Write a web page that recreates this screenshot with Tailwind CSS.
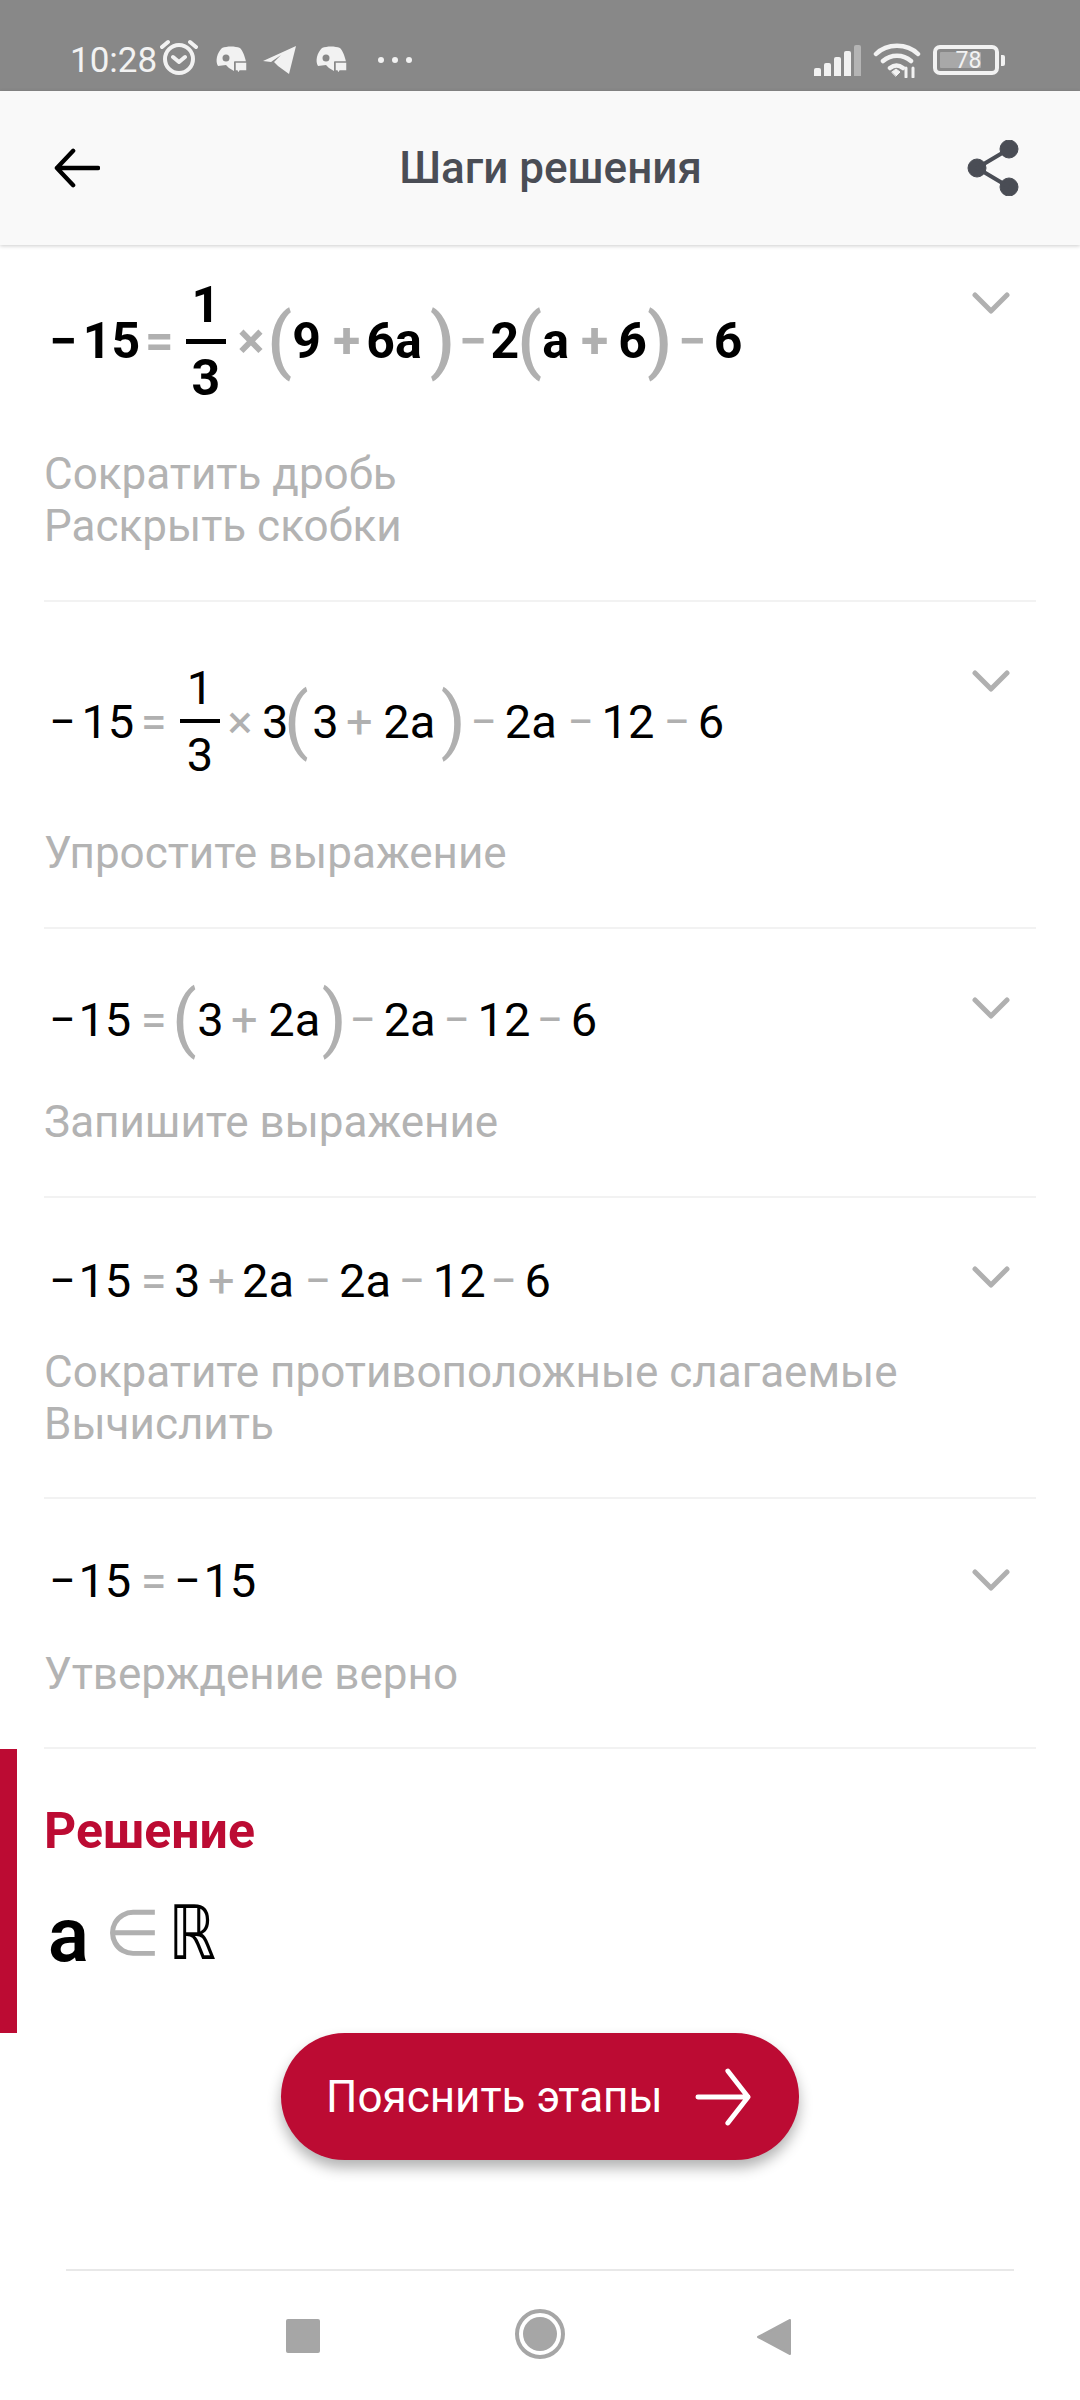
<!DOCTYPE html>
<html lang="ru">
<head>
  <meta charset="UTF-8" />
  <meta name="viewport" content="width=device-width, initial-scale=1.0"/>
  <script src="https://cdn.jsdelivr.net/npm/@tailwindcss/browser@4"></script>
  <title>Шаги решения</title>
</head>
<body class="bg-white font-['Roboto',sans-serif]">
<div class="w-[1080px] h-[2400px] flex flex-col overflow-hidden relative">

  <!-- status bar -->
  <div class="h-[91px] bg-[#888888] flex items-end justify-between pb-[11px] pl-[70px] pr-[75px] text-[#f2f2f2] shrink-0">
    <div class="flex items-center h-[40px]">
      <span class="text-[35px] leading-none w-[90px]">10:28</span>
      <svg class="w-[38px] h-[38px] mt-[-6px]" viewBox="0 0 38 38" fill="none" stroke="#f2f2f2" stroke-width="4" stroke-linecap="round" stroke-linejoin="round"><circle cx="19" cy="21" r="14"/><path d="M13 19l6 5 6-5M2 9l6-5M36 9l-6-5"/></svg>
      <svg class="w-[34px] h-[30px] ml-[16px]" viewBox="0 0 32 30" fill="#f2f2f2"><path d="M7 3c5-2 13-2 18 0 3 3 5 9 6 14H19v9l-5-3-3-3-8 1c-3-5-1-13 4-18z"/><circle cx="11" cy="13" r="3.5" fill="#888888"/><path d="M20 17h12v9h-7l-2 3-1-3h-2z" stroke="#888888" stroke-width="1.5"/></svg>
      <svg class="w-[34px] h-[30px] ml-[15px]" viewBox="0 0 34 30" fill="#f2f2f2"><path d="M0 16 33 1 26 29 15 21 11 17 18 10 8 17z"/></svg>
      <svg class="w-[34px] h-[30px] ml-[17px]" viewBox="0 0 32 30" fill="#f2f2f2"><path d="M7 3c5-2 13-2 18 0 3 3 5 9 6 14H19v9l-5-3-3-3-8 1c-3-5-1-13 4-18z"/><circle cx="11" cy="13" r="3.5" fill="#888888"/><path d="M20 17h12v9h-7l-2 3-1-3h-2z" stroke="#888888" stroke-width="1.5"/></svg>
      <div class="flex gap-[8px] ml-[30px]"><i class="w-[6px] h-[6px] rounded-full bg-[#f2f2f2]"></i><i class="w-[6px] h-[6px] rounded-full bg-[#f2f2f2]"></i><i class="w-[6px] h-[6px] rounded-full bg-[#f2f2f2]"></i></div>
    </div>
    <div class="flex items-center h-[40px]">
      <div class="flex items-end gap-[3px] h-[32px]">
        <i class="w-[7px] h-[8px] rounded-t-[2px] bg-[#f2f2f2]"></i>
        <i class="w-[7px] h-[13px] rounded-t-[2px] bg-[#f2f2f2]"></i>
        <i class="w-[7px] h-[19px] rounded-t-[2px] bg-[#f2f2f2]"></i>
        <i class="w-[7px] h-[25px] rounded-t-[2px] bg-[#f2f2f2]"></i>
        <i class="w-[7px] h-[31px] rounded-t-[2px] bg-[#b4b4b4]"></i>
      </div>
      <svg class="w-[48px] h-[36px] ml-[12px]" viewBox="0 0 48 36" fill="none" stroke="#f2f2f2" stroke-width="4.5" stroke-linecap="round"><path d="M3 12C14 1 34 1 45 12M10 19c8-7 20-7 28 0M17 26c4-3 9-3 13 0"/><path d="M19 30l4-3 4 3-4 4z" fill="#f2f2f2" stroke-width="1"/><path d="M33 35v-9M40 35v-9" stroke-width="3"/></svg>
      <div class="ml-[12px] w-[66px] h-[30px] border-[4px] border-[#f2f2f2] rounded-[7px] relative flex items-center">
        <div class="absolute left-[3px] top-[3px] bottom-[3px] w-[41px] bg-[#a8a8a8] rounded-[1px]"></div>
        <span class="relative w-full text-center text-[23px] leading-none pl-[5px]">78</span>
      </div>
      <i class="ml-[2px] w-[4px] h-[11px] rounded-r-[2px] bg-[#f2f2f2]"></i>
    </div>
  </div>

  <!-- top bar -->
  <div class="h-[154px] bg-[#f9f9f9] shadow-[0_1px_4px_rgba(0,0,0,0.2)] shrink-0 relative z-10 flex items-center justify-between pl-[54px] pr-[61px]">
    <svg class="w-[46px] h-[40px]" viewBox="0 0 48 40" fill="none" stroke="#000" stroke-width="4.5" stroke-linecap="round" stroke-linejoin="round"><path d="M46 20H3M20 2 3 20l17 18"/></svg>
    <span class="ml-[34px] text-[44px] font-medium text-[#4a4d55] leading-none">Шаги решения</span>
    <svg class="w-[52px] h-[56px]" viewBox="0 0 52 56" fill="#4a4d55" stroke="#4a4d55"><circle cx="42" cy="9" r="9"/><circle cx="10" cy="28" r="9"/><circle cx="42" cy="47" r="9"/><path d="M42 9 10 28l32 19" fill="none" stroke-width="4"/></svg>
  </div>

  <!-- steps -->
  <div class="px-[44px] shrink-0">
    <div class="h-[357px] border-b-2 border-[#f2f2f2] relative">
      <svg class="absolute right-[26px] top-[47px] w-[38px] h-[22px]" viewBox="0 0 38 22" fill="none" stroke="#b0b0b0" stroke-width="5" stroke-linecap="round" stroke-linejoin="round"><path d="M3 3l16 16L35 3"/></svg>
      <div class="absolute left-[5px] top-[49px] h-[94px] flex items-center text-[50px] font-bold text-black leading-none gap-[12px]">
        <span>−</span><span class="ml-[-6px]">15</span><span class="text-[#b0b0b0] ml-[-7px]">=</span>
        <span class="flex flex-col items-center w-[40px]"><span>1</span><i class="w-full h-[5px] bg-black my-[9px]"></i><span>3</span></span>
        <span class="text-[#b0b0b0]">×</span><span class="text-[#b0b0b0] text-[72px] font-medium ml-[-9px] mr-[-12px]">(</span>
        <span>9</span><span class="text-[#b0b0b0]">+</span><span class="ml-[-6px]">6a</span>
        <span class="text-[#b0b0b0] text-[72px] font-medium ml-[-4px] mr-[-8px]">)</span><span class="text-[#b0b0b0]">−</span><span class="ml-[-8px]">2</span>
        <span class="text-[#b0b0b0] text-[72px] font-medium ml-[-14px] mr-[-12px]">(</span><span>a</span><span class="text-[#b0b0b0]">+</span><span class="ml-[-2px]">6</span>
        <span class="text-[#b0b0b0] text-[72px] font-medium ml-[-12px] mr-[-6px]">)</span><span class="text-[#b0b0b0]">−</span><span class="ml-[-4px]">6</span>
      </div>
      <div class="absolute left-0 top-[203px] text-[44px] leading-[52px] text-[#b3b3b3]">Сократить дробь<br>Раскрыть скобки</div>
    </div>

    <div class="h-[327px] border-b-2 border-[#f2f2f2] relative">
      <svg class="absolute right-[26px] top-[68px] w-[38px] h-[22px]" viewBox="0 0 38 22" fill="none" stroke="#b0b0b0" stroke-width="5" stroke-linecap="round" stroke-linejoin="round"><path d="M3 3l16 16L35 3"/></svg>
      <div class="absolute left-[5px] top-[72px] h-[94px] flex items-center text-[47px] text-black leading-none gap-[7.5px]">
        <span>−</span><span class="ml-[-2px]">15</span><span class="text-[#b0b0b0] ml-[-1px]">=</span>
        <span class="flex flex-col items-center w-[40px] ml-[6px]"><span>1</span><i class="w-full h-[4px] bg-black my-[8px]"></i><span>3</span></span>
        <span class="text-[#b0b0b0]">×</span><span class="ml-[2px]">3</span><span class="text-[#b0b0b0] text-[72px] ml-[-12px] mr-[-4px]">(</span>
        <span>3</span><span class="text-[#b0b0b0]">+</span><span class="ml-[3px]">2a</span>
        <span class="text-[#b0b0b0] text-[72px] ml-[-2px] mr-[-3px]">)</span><span class="text-[#b0b0b0]">−</span><span>2a</span>
        <span class="text-[#b0b0b0] ml-[3px]">−</span><span>12</span><span class="text-[#b0b0b0] ml-[1.5px]">−</span><span>6</span>
      </div>
      <div class="absolute left-0 top-[225px] text-[44px] leading-[52px] text-[#b3b3b3]">Упростите выражение</div>
    </div>

    <div class="h-[269px] border-b-2 border-[#f2f2f2] relative">
      <svg class="absolute right-[26px] top-[68px] w-[38px] h-[22px]" viewBox="0 0 38 22" fill="none" stroke="#b0b0b0" stroke-width="5" stroke-linecap="round" stroke-linejoin="round"><path d="M3 3l16 16L35 3"/></svg>
      <div class="absolute left-[5px] top-[43px] h-[94px] flex items-center text-[47px] text-black leading-none gap-[7.5px]">
        <span>−</span><span class="ml-[-5px]">15</span><span class="text-[#b0b0b0] ml-[2px]">=</span><span class="text-[#b0b0b0] text-[72px] ml-[-2px] mr-[-7px]">(</span>
        <span>3</span><span class="text-[#b0b0b0]">+</span><span class="ml-[3px]">2a</span>
        <span class="text-[#b0b0b0] text-[72px] ml-[-6px] mr-[-5px]">)</span><span class="text-[#b0b0b0]">−</span><span>2a</span>
        <span class="text-[#b0b0b0]">−</span><span>12</span><span class="text-[#b0b0b0] ml-[-1.5px]">−</span><span>6</span>
      </div>
      <div class="absolute left-0 top-[167px] text-[44px] leading-[52px] text-[#b3b3b3]">Запишите выражение</div>
    </div>

    <div class="h-[301px] border-b-2 border-[#f2f2f2] relative">
      <svg class="absolute right-[26px] top-[68px] w-[38px] h-[22px]" viewBox="0 0 38 22" fill="none" stroke="#b0b0b0" stroke-width="5" stroke-linecap="round" stroke-linejoin="round"><path d="M3 3l16 16L35 3"/></svg>
      <div class="absolute left-[5px] top-[35px] h-[94px] flex items-center text-[47px] text-black leading-none gap-[7.5px]">
        <span>−</span><span class="ml-[-5px]">15</span><span class="text-[#b0b0b0] ml-[2px]">=</span><span>3</span>
        <span class="text-[#b0b0b0]">+</span><span>2a</span><span class="text-[#b0b0b0] ml-[3px]">−</span><span>2a</span>
        <span class="text-[#b0b0b0]">−</span><span>12</span><span class="text-[#b0b0b0] ml-[-3px]">−</span><span>6</span>
      </div>
      <div class="absolute left-0 top-[148px] text-[44px] leading-[52px] text-[#b3b3b3]">Сократите противоположные слагаемые<br>Вычислить</div>
    </div>

    <div class="h-[250px] border-b-2 border-[#f2f2f2] relative">
      <svg class="absolute right-[26px] top-[70px] w-[38px] h-[22px]" viewBox="0 0 38 22" fill="none" stroke="#b0b0b0" stroke-width="5" stroke-linecap="round" stroke-linejoin="round"><path d="M3 3l16 16L35 3"/></svg>
      <div class="absolute left-[5px] top-[34px] h-[94px] flex items-center text-[47px] text-black leading-none gap-[7.5px]">
        <span>−</span><span class="ml-[-5px]">15</span><span class="text-[#b0b0b0] ml-[2px]">=</span><span>−</span><span class="ml-[-5px]">15</span>
      </div>
      <div class="absolute left-0 top-[149px] text-[44px] leading-[52px] text-[#b3b3b3]">Утверждение верно</div>
    </div>
  </div>

  <!-- solution -->
  <div class="h-[284px] border-l-[17px] border-[#bc0b33] pl-[27px] pt-[56px] shrink-0">
    <div class="text-[50px] font-bold text-[#bc0b33] leading-[52px]">Решение</div>
    <div class="flex items-center mt-[36px] h-[80px] pl-[4px] leading-none">
      <span class="text-[76px] font-semibold text-black mt-[4px]">a</span>
      <span class="ml-[16px] text-[64px] text-[#b0b0b0] font-['DejaVu_Sans']">∈</span>
      <span class="ml-[8px] text-[60px] text-black font-['DejaVu_Sans'] scale-y-[1.25]">ℝ</span>
    </div>
  </div>

  <!-- button -->
  <div class="flex justify-center shrink-0">
    <div class="w-[518px] h-[127px] rounded-full bg-[#bc0b33] shadow-[0_8px_14px_rgba(0,0,0,0.3)] flex items-center pl-[45px] gap-[32px]">
      <span class="text-[44px] text-white leading-none">Пояснить этапы</span>
      <svg class="w-[56px] h-[60px]" viewBox="0 0 58 60" fill="none" stroke="#fff" stroke-width="5" stroke-linecap="round" stroke-linejoin="round"><path d="M3 30h52M34 3l21 27-21 27"/></svg>
    </div>
  </div>

  <!-- nav bar -->
  <div class="mt-[109px] mx-[66px] border-t-2 border-[#e8e8e8] h-[130px] flex items-center justify-center relative shrink-0">
    <div class="absolute left-[220px] top-[48px] w-[34px] h-[34px] rounded-[2px] bg-[#a6a6a6]"></div>
    <div class="w-[50px] h-[50px] rounded-full border-[4px] border-[#a6a6a6] p-[4px] mt-[-2px]"><div class="w-full h-full rounded-full bg-[#a6a6a6]"></div></div>
    <svg class="absolute left-[690px] top-[47px] w-[36px] h-[38px]" viewBox="0 0 36 38" fill="#a6a6a6" stroke="#a6a6a6" stroke-width="2" stroke-linejoin="round"><path d="M2 19 34 2v34z"/></svg>
  </div>
</div>
</body>
</html>
